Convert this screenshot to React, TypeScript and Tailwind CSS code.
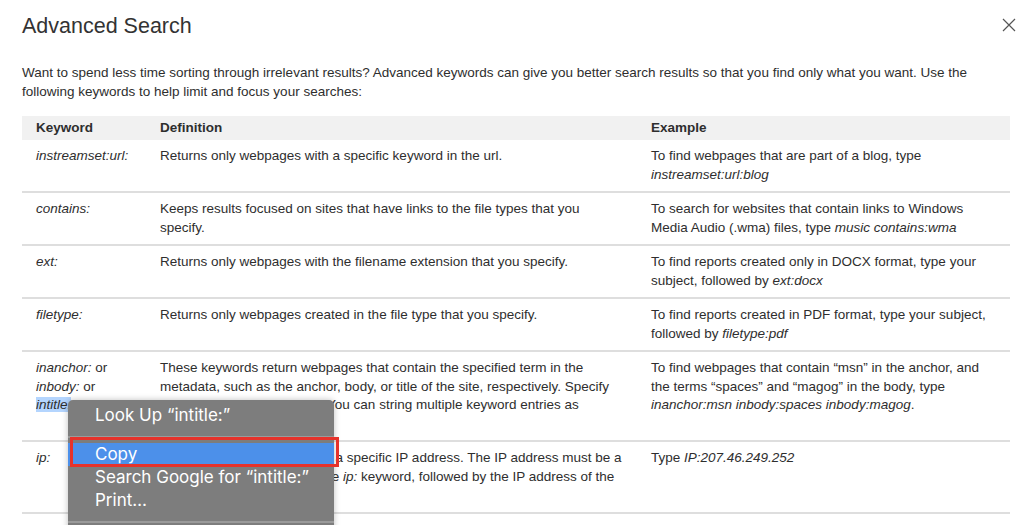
import type { ReactNode } from "react";

type Row = {
  keyword: ReactNode;
  definition: ReactNode;
  example: ReactNode;
};

const rows: Row[] = [
  {
    keyword: <i>instreamset:url:</i>,
    definition: "Returns only webpages with a specific keyword in the url.",
    example: (
      <>
        To find webpages that are part of a blog, type <i>instreamset:url:blog</i>
      </>
    ),
  },
  {
    keyword: <i>contains:</i>,
    definition:
      "Keeps results focused on sites that have links to the file types that you specify.",
    example: (
      <>
        To search for websites that contain links to Windows Media Audio (.wma) files, type{" "}
        <i>music contains:wma</i>
      </>
    ),
  },
  {
    keyword: <i>ext:</i>,
    definition: "Returns only webpages with the filename extension that you specify.",
    example: (
      <>
        To find reports created only in DOCX format, type your subject, followed by <i>ext:docx</i>
      </>
    ),
  },
  {
    keyword: <i>filetype:</i>,
    definition: "Returns only webpages created in the file type that you specify.",
    example: (
      <>
        To find reports created in PDF format, type your subject, followed by <i>filetype:pdf</i>
      </>
    ),
  },
  {
    keyword: (
      <>
        <i>inanchor:</i> or <i>inbody:</i> or <span className="bg-[#b4d5fe]"><i>intitle:</i></span>
      </>
    ),
    definition:
      "These keywords return webpages that contain the specified term in the metadata, such as the anchor, body, or title of the site, respectively. Specify one keyword for each term. You can string multiple keyword entries as needed.",
    example: (
      <>
        To find webpages that contain “msn” in the anchor, and the terms “spaces” and “magog” in the body, type{" "}
        <i>inanchor:msn inbody:spaces inbody:magog</i>.
      </>
    ),
  },
  {
    keyword: <i>ip:</i>,
    definition: (
      <>
        Returns only webpages from a specific IP address. The IP address must be a dotted quad number. Type
        the <i>ip:</i> keyword, followed by the IP address of the website.
      </>
    ),
    example: (
      <>
        Type <i>IP:207.46.249.252</i>
      </>
    ),
  },
  {
    keyword: <i>language:</i>,
    definition:
      "Returns webpages for a specific language. Specify the language code directly after the language: keyword.",
    example: (
      <>
        To see webpages only about antiques in English, type <i>antiques language:en</i>
      </>
    ),
  },
];

function CloseIcon() {
  return (
    <svg width="14" height="14" viewBox="0 0 14 14" fill="none" stroke="#555" strokeWidth="1.2">
      <path d="M1 1L13 13M13 1L1 13" />
    </svg>
  );
}

function ContextMenu() {
  return (
    <div className="absolute left-[68px] top-[400px] w-[266px] h-[140px] bg-[#7d7d7d] rounded-t-[5px] pt-[4px] text-white text-[17px] font-['Inter',sans-serif] shadow-[0_0_6px_rgba(0,0,0,0.25)]">
      <div className="h-[23px] pl-[27px] leading-[23px]">Look Up “intitle:”</div>
      <div className="mt-[9px] mb-[5px] h-[2px] bg-[#9a9a9a]" />
      <div className="h-[23px] pl-[27px] leading-[23px] bg-[#4c90ea]">Copy</div>
      <div className="h-[23px] pl-[27px] leading-[23px]">Search Google for “intitle:”</div>
      <div className="h-[23px] pl-[27px] leading-[23px]">Print…</div>
      <div className="mt-[9px] h-[2px] bg-[#9a9a9a]" />
    </div>
  );
}

export default function App() {
  return (
    <div className="relative w-full h-[525px] overflow-hidden bg-white text-[#2e2e2e] font-['Liberation_Sans',Arial,sans-serif]">
      <div className="px-[22px] pt-[12px]">
        <div className="flex items-start justify-between">
          <h1 className="text-[21.5px] leading-[28px] text-[#333]">Advanced Search</h1>
          <div className="mt-[6px] mr-[-14px]">
            <CloseIcon />
          </div>
        </div>

        <p className="mt-[23px] text-[13.5px] leading-[19px] pr-[20px]">
          Want to spend less time sorting through irrelevant results? Advanced keywords can give you better
          search results so that you find only what you want. Use the following keywords to help limit and
          focus your searches:
        </p>

        <div className="mt-[15px] w-[988px] text-[13.5px] leading-[18.5px]">
          <div className="grid grid-cols-[124px_491px_373px] bg-[#f1f1f1] h-[24px] items-center font-bold">
            <div className="pl-[14px]">Keyword</div>
            <div className="pl-[14px]">Definition</div>
            <div className="pl-[14px]">Example</div>
          </div>
          {rows.map((row, i) => (
            <div
              key={i}
              className="grid grid-cols-[124px_491px_373px] border-b-2 border-[#dedede] pt-[7px] pb-[7px] min-h-[53px]"
            >
              <div className="pl-[14px] pr-[14px]">{row.keyword}</div>
              <div className="pl-[14px] pr-[14px]">{row.definition}</div>
              <div className="pl-[14px] pr-[14px]">{row.example}</div>
            </div>
          ))}
        </div>
      </div>

      <ContextMenu />
      <div className="absolute left-[70px] top-[437px] w-[269px] h-[30px] border-[3px] border-[#e6322b]" />
    </div>
  );
}
